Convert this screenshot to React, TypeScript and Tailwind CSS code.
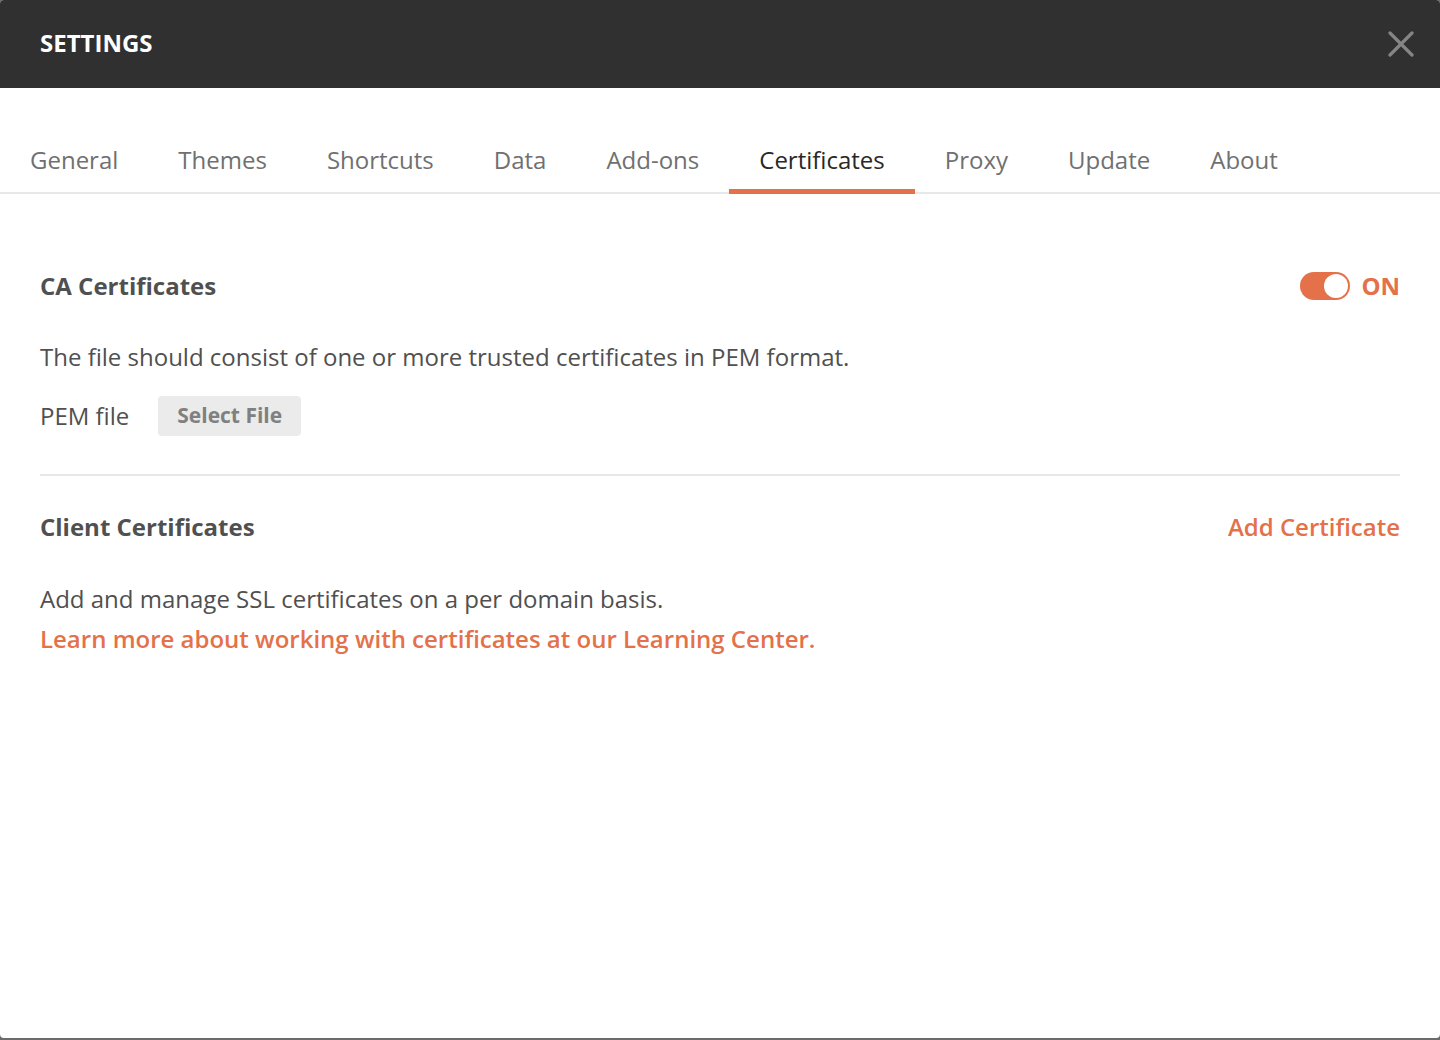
import { useState } from "react";

const tabs = ["General", "Themes", "Shortcuts", "Data", "Add-ons", "Certificates", "Proxy", "Update", "About"];

export default function App() {
  const [active, setActive] = useState("Certificates");
  const [caOn, setCaOn] = useState(true);

  return (
    <div className="h-[1040px] w-[1440px] bg-[#6b6b6b] font-['Open_Sans',sans-serif]">
      <div className="flex h-[1038px] flex-col overflow-hidden rounded-[4px] bg-white">
        <header className="flex h-[88px] shrink-0 items-center justify-between bg-[#303030] pl-10 pr-[26px]">
          <h1 className="pb-[3px] text-[24px] font-bold text-white">SETTINGS</h1>
          <button className="text-[#858585]" aria-label="Close">
            <svg viewBox="0 0 26 26" width="26" height="26" fill="none">
              <path d="M2 2L24 24M24 2L2 24" stroke="currentColor" strokeWidth="3.2" strokeLinecap="round" />
            </svg>
          </button>
        </header>

        <nav className="flex h-[106px] shrink-0 items-end border-b-2 border-[#e8e8e8]">
          {tabs.map((t) => (
            <button
              key={t}
              onClick={() => setActive(t)}
              className={
                t === active
                  ? "-mb-[2px] flex h-[104px] items-center border-b-[5px] border-[#e4714a] px-[30px] pt-[40px] text-[24px] text-[#282828]"
                  : "-mb-[2px] flex h-[104px] items-center border-b-[5px] border-transparent px-[30px] pt-[40px] text-[24px] text-[#707070]"
              }
            >
              {t}
            </button>
          ))}
        </nav>

        <main className="px-10 pt-[74px]">
          <section>
            <div className="flex h-[36px] items-center justify-between">
              <h2 className="text-[24px] font-bold text-[#505050]">CA Certificates</h2>
              <button onClick={() => setCaOn(!caOn)} className="flex items-center gap-[11px]">
                <span
                  className={
                    caOn
                      ? "flex h-[28px] w-[50px] items-center justify-end rounded-full bg-[#e4714a] p-[2px]"
                      : "flex h-[28px] w-[50px] items-center justify-start rounded-full bg-[#c8c8c8] p-[2px]"
                  }
                >
                  <span className="h-[24px] w-[24px] rounded-full bg-white" />
                </span>
                <span className={caOn ? "text-[24px] font-bold text-[#e4714a]" : "text-[24px] font-bold text-[#909090]"}>
                  {caOn ? "ON" : "OFF"}
                </span>
              </button>
            </div>
            <p className="mt-[35px] text-[24px] leading-[36px] text-[#505050]">
              The file should consist of one or more trusted certificates in PEM format.
            </p>
            <div className="mt-[21px] flex h-[40px] items-center gap-[29px]">
              <span className="text-[24px] text-[#505050]">PEM file</span>
              <button className="h-[40px] rounded-[4px] bg-[#ebebeb] px-[19px] text-[21px] font-bold text-[#808080]">
                Select File
              </button>
            </div>
          </section>

          <div className="mt-[38px] h-[2px] bg-[#e8e8e8]" />

          <section className="pt-[33px]">
            <div className="flex h-[36px] items-center justify-between">
              <h2 className="text-[24px] font-bold text-[#505050]">Client Certificates</h2>
              <button className="text-[24px] font-semibold text-[#e4714a]">Add Certificate</button>
            </div>
            <p className="mt-[34px] text-[24px] leading-[40px] text-[#505050]">
              Add and manage SSL certificates on a per domain basis.
            </p>
            <a href="#" className="block text-[24px] font-semibold leading-[40px] text-[#e4714a]">
              Learn more about working with certificates at our Learning Center.
            </a>
          </section>
        </main>
      </div>
    </div>
  );
}
